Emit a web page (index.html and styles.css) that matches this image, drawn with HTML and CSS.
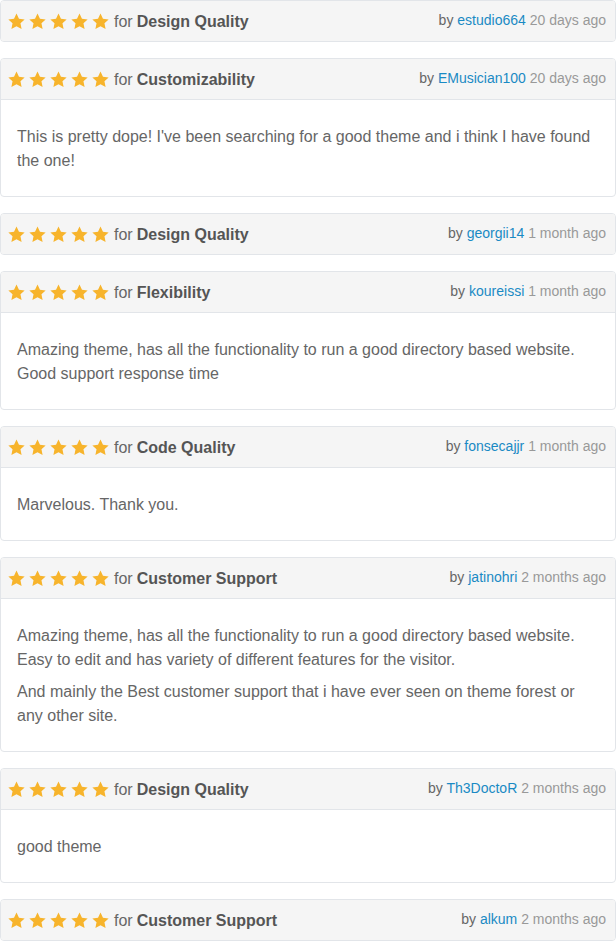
FILE: index.html
```html
<!DOCTYPE html>
<html>
<head>
<meta name="viewport" content="width=device-width, initial-scale=1">
<link rel="stylesheet" href="styles.css">
</head>
<body>

<svg width="0" height="0" style="position:absolute">
  <symbol id="star" viewBox="0 0 24 24">
    <path d="M12 .8l3.5 7.3 8 1-5.9 5.5 1.6 8L12 18.6 4.8 22.6l1.6-8L.5 9.1l8-1z"/>
  </symbol>
</svg>

<div class="review">
  <div class="review-head">
    <div class="rating">
      <span class="stars"><svg><use href="#star"/></svg><svg><use href="#star"/></svg><svg><use href="#star"/></svg><svg><use href="#star"/></svg><svg><use href="#star"/></svg></span>
      for <b>Design Quality</b>
    </div>
    <div class="meta">by <a href="#">estudio664</a> <span class="when">20 days ago</span></div>
  </div>
</div>

<div class="review">
  <div class="review-head">
    <div class="rating">
      <span class="stars"><svg><use href="#star"/></svg><svg><use href="#star"/></svg><svg><use href="#star"/></svg><svg><use href="#star"/></svg><svg><use href="#star"/></svg></span>
      for <b>Customizability</b>
    </div>
    <div class="meta">by <a href="#">EMusician100</a> <span class="when">20 days ago</span></div>
  </div>
  <div class="review-body">
    <p>This is pretty dope! I've been searching for a good theme and i think I have found the one!</p>
  </div>
</div>

<div class="review">
  <div class="review-head">
    <div class="rating">
      <span class="stars"><svg><use href="#star"/></svg><svg><use href="#star"/></svg><svg><use href="#star"/></svg><svg><use href="#star"/></svg><svg><use href="#star"/></svg></span>
      for <b>Design Quality</b>
    </div>
    <div class="meta">by <a href="#">georgii14</a> <span class="when">1 month ago</span></div>
  </div>
</div>

<div class="review">
  <div class="review-head">
    <div class="rating">
      <span class="stars"><svg><use href="#star"/></svg><svg><use href="#star"/></svg><svg><use href="#star"/></svg><svg><use href="#star"/></svg><svg><use href="#star"/></svg></span>
      for <b>Flexibility</b>
    </div>
    <div class="meta">by <a href="#">koureissi</a> <span class="when">1 month ago</span></div>
  </div>
  <div class="review-body">
    <p>Amazing theme, has all the functionality to run a good directory based website. Good support response time</p>
  </div>
</div>

<div class="review">
  <div class="review-head">
    <div class="rating">
      <span class="stars"><svg><use href="#star"/></svg><svg><use href="#star"/></svg><svg><use href="#star"/></svg><svg><use href="#star"/></svg><svg><use href="#star"/></svg></span>
      for <b>Code Quality</b>
    </div>
    <div class="meta">by <a href="#">fonsecajjr</a> <span class="when">1 month ago</span></div>
  </div>
  <div class="review-body">
    <p>Marvelous. Thank you.</p>
  </div>
</div>

<div class="review">
  <div class="review-head">
    <div class="rating">
      <span class="stars"><svg><use href="#star"/></svg><svg><use href="#star"/></svg><svg><use href="#star"/></svg><svg><use href="#star"/></svg><svg><use href="#star"/></svg></span>
      for <b>Customer Support</b>
    </div>
    <div class="meta">by <a href="#">jatinohri</a> <span class="when">2 months ago</span></div>
  </div>
  <div class="review-body">
    <p>Amazing theme, has all the functionality to run a good directory based website. Easy to edit and has variety of different features for the visitor.</p>
    <p>And mainly the Best customer support that i have ever seen on theme forest or any other site.</p>
  </div>
</div>

<div class="review">
  <div class="review-head">
    <div class="rating">
      <span class="stars"><svg><use href="#star"/></svg><svg><use href="#star"/></svg><svg><use href="#star"/></svg><svg><use href="#star"/></svg><svg><use href="#star"/></svg></span>
      for <b>Design Quality</b>
    </div>
    <div class="meta">by <a href="#">Th3DoctoR</a> <span class="when">2 months ago</span></div>
  </div>
  <div class="review-body">
    <p>good theme</p>
  </div>
</div>

<div class="review">
  <div class="review-head">
    <div class="rating">
      <span class="stars"><svg><use href="#star"/></svg><svg><use href="#star"/></svg><svg><use href="#star"/></svg><svg><use href="#star"/></svg><svg><use href="#star"/></svg></span>
      for <b>Customer Support</b>
    </div>
    <div class="meta">by <a href="#">alkum</a> <span class="when">2 months ago</span></div>
  </div>
</div>

</body>
</html>
```

FILE: styles.css
```css
* {
  box-sizing: border-box;
}

body {
  margin: 0;
  font-family: "Liberation Sans", Arial, sans-serif;
  font-size: 16px;
  color: #666;
  background: #fff;
}

/* one review card */
.review {
  border: 1px solid #e2e5e9;
  border-radius: 4px;
  margin-bottom: 16px;
  overflow: hidden;
}

.review-head {
  height: 40px;
  background: #f5f5f5;
  padding: 0 9px 0 7px;
  display: flex;
  align-items: center;
  justify-content: space-between;
}

.rating {
  display: flex;
  align-items: center;
  gap: 4px;
  padding-top: 1px;
}

.rating b {
  color: #555;
}

.stars {
  display: flex;
  gap: 4px;
  margin-right: 1px;
}

.stars svg {
  width: 17px;
  height: 17px;
  fill: #f7b42c;
}

.meta {
  font-size: 14px;
  color: #666;
  padding-bottom: 2px;
}

.meta a {
  color: #1a8ac4;
  text-decoration: none;
}

.meta .when {
  color: #999;
}

.review-body {
  border-top: 1px solid #e2e5e9;
  padding: 25px 16px 23px;
  line-height: 24px;
}

.review-body p {
  margin: 0 0 8px;
}

.review-body p:last-child {
  margin-bottom: 0;
}
```
